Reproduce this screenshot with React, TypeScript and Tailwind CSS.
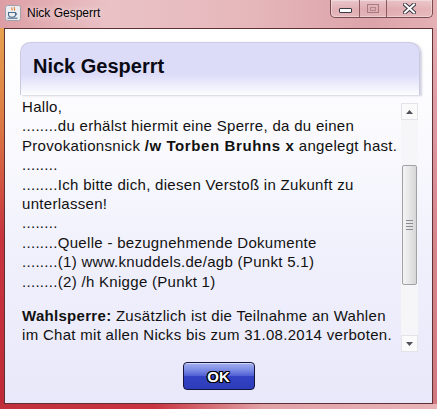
import React from "react";

const FONT = { fontFamily: '"Liberation Sans", Arial, sans-serif' };

function JavaIcon() {
  return (
    <svg width="16" height="16" viewBox="0 0 16 16">
      <rect x="0.5" y="0.5" width="15" height="15" rx="2" fill="#eceef2" stroke="#9ea2ac" />
      <path d="M7 2.5c-1.2 1 1 1.8 0 3 M9.5 2c-1.4 1.3 1.2 2 -0.2 3.5" stroke="#e07a2a" strokeWidth="1.1" fill="none" />
      <path d="M3.5 7.5h7v2.2c0 1.5-1.4 2.5-3.5 2.5s-3.5-1-3.5-2.5z" fill="none" stroke="#4a6a8e" strokeWidth="1.1" />
      <path d="M10.5 8.2c1.6-0.2 1.8 1.8 0 2" fill="none" stroke="#4a6a8e" strokeWidth="1" />
      <path d="M2.5 13.2h10" stroke="#4a6a8e" strokeWidth="1.1" />
    </svg>
  );
}

function TitleBar() {
  return (
    <div className="h-[28px] flex items-start shrink-0">
      <div className="mt-[5px] ml-[5px]">
        <JavaIcon />
      </div>
      <div className="ml-[6px] mt-[6px] text-[12px] leading-[14px] text-black [text-shadow:0_0_6px_rgba(255,255,255,0.9)]" style={FONT}>
        Nick Gesperrt
      </div>
      <div className="ml-auto mr-[4px] flex h-[18px] rounded-b-[5px] border border-t-0 border-[#7a4a4e] overflow-hidden shadow-[inset_0_0_0_1px_rgba(255,255,255,0.35)]">
        <div className="w-[28px] h-full flex items-end justify-center pb-[4px] bg-[linear-gradient(180deg,rgba(255,255,255,0.35),rgba(255,255,255,0.08)_55%,rgba(255,255,255,0.18))]">
          <div className="w-[13px] h-[5px] border border-[#3a3a44] bg-white rounded-[1px]" />
        </div>
        <div className="w-[27px] h-full border-l border-[#8a5a5e] flex items-start justify-center pt-[4px] bg-[linear-gradient(180deg,rgba(255,255,255,0.35),rgba(255,255,255,0.08)_55%,rgba(255,255,255,0.18))]">
          <div className="w-[12px] h-[9px] border border-[rgba(150,110,115,0.8)] flex items-center justify-center">
            <div className="w-[6px] h-[4px] border border-[rgba(150,110,115,0.6)]" />
          </div>
        </div>
        <div className="w-[46px] h-full border-l border-[#8a5a5e] flex items-start justify-center pt-[3px] bg-[linear-gradient(180deg,rgba(255,255,255,0.3),rgba(255,255,255,0.06)_55%,rgba(255,255,255,0.15))]">
          <svg width="13" height="11" viewBox="0 0 13 11">
            <path d="M2 1.5L11 9.5M11 1.5L2 9.5" stroke="#3a3a44" strokeWidth="4" strokeLinecap="square" />
            <path d="M2 1.5L11 9.5M11 1.5L2 9.5" stroke="#ffffff" strokeWidth="2" strokeLinecap="square" />
          </svg>
        </div>
      </div>
    </div>
  );
}

function ScrollBar() {
  return (
    <div className="mt-[6px] w-[17px] h-[249px] flex flex-col bg-[#f6f6f8]">
      <div className="h-[17px] flex items-center justify-center bg-[#fafafa] border border-[#e4e4e8]">
        <svg width="7" height="4" viewBox="0 0 7 4">
          <path d="M0 4L3.5 0L7 4z" fill="#505058" />
        </svg>
      </div>
      <div className="h-[45px]" />
      <div className="h-[120px] mx-[1px] rounded-[2px] border border-[#a0a0a6] bg-[linear-gradient(90deg,#f4f4f4,#e6e6e6_50%,#d6d6d8)] flex flex-col items-center justify-center gap-[2px]">
        <div className="w-[7px] h-[1px] bg-[#8a8a90]" />
        <div className="w-[7px] h-[1px] bg-[#8a8a90]" />
        <div className="w-[7px] h-[1px] bg-[#8a8a90]" />
        <div className="w-[7px] h-[1px] bg-[#8a8a90]" />
      </div>
      <div className="flex-1" />
      <div className="h-[17px] flex items-center justify-center bg-[#fafafa] border border-[#e4e4e8]">
        <svg width="7" height="4" viewBox="0 0 7 4">
          <path d="M0 0L3.5 4L7 0z" fill="#505058" />
        </svg>
      </div>
    </div>
  );
}

function Client() {
  const D = "........";
  return (
    <div className="w-[429px] h-full border border-[#5e2f33] flex flex-col bg-[linear-gradient(180deg,#ffffff_0%,#fbfbfe_25%,#efeffc_65%,#e8e8fa_100%)]" style={FONT}>
      <div className="mt-[13px] ml-[15px] w-[400px] h-[53px] rounded-t-[10px] border-t border-x border-[#c9cadf] shadow-[2px_1px_2px_rgba(160,160,190,0.45)] pt-[11px] pl-[12px] bg-[linear-gradient(180deg,#dcdcf9_0%,#dcdcf9_60%,#eeeefc_82%,#fdfdff_100%)]">
        <div className="text-[20px] leading-[24px] font-bold text-[#0a0a14]">Nick Gesperrt</div>
      </div>
      <div className="flex h-[253px] mt-[2px]">
        <div className="pl-[17px] w-[396px] text-[15px] leading-[19.4px] tracking-[0.3px] text-[#111111] whitespace-nowrap">
          <div>Hallo,</div>
          <div>{D}du erhälst hiermit eine Sperre, da du einen</div>
          <div>
            Provokationsnick <b className="tracking-[0.6px]">/w Torben Bruhns x</b> angelegt hast.
          </div>
          <div>{D}</div>
          <div>{D}Ich bitte dich, diesen Verstoß in Zukunft zu</div>
          <div>unterlassen!</div>
          <div>{D}</div>
          <div>{D}Quelle - bezugnehmende Dokumente</div>
          <div>{D}(1) www.knuddels.de/agb (Punkt 5.1)</div>
          <div>{D}(2) /h Knigge (Punkt 1)</div>
          <div className="mt-[15px]">
            <b>Wahlsperre:</b> Zusätzlich ist die Teilnahme an Wahlen
          </div>
          <div>im Chat mit allen Nicks bis zum 31.08.2014 verboten.</div>
        </div>
        <ScrollBar />
      </div>
      <div className="mt-[12px] self-center w-[72px] h-[28px] rounded-[4px] border border-[#14143c] bg-[linear-gradient(180deg,#a4b0f0_0%,#7686e2_30%,#4e5ed4_50%,#3242c4_52%,#2c3cb8_100%)] shadow-[inset_0_1px_0_rgba(255,255,255,0.5)] flex items-center justify-center">
        <span className="text-[15px] font-bold text-white leading-none [text-shadow:-1px_-1px_0_#000,1px_-1px_0_#000,-1px_1px_0_#000,1px_1px_0_#000,0_1px_0_#000,0_-1px_0_#000,1px_0_0_#000,-1px_0_0_#000]">
          OK
        </span>
      </div>
    </div>
  );
}

export default function App() {
  return (
    <div className="w-[437px] h-[409px] flex flex-col overflow-hidden bg-[linear-gradient(90deg,#dc9ea4,#eac2c6_25%,#e6b8bc_55%,#dca4aa_85%,#e4b0b4)]">
      <TitleBar />
      <div className="flex h-[376px]">
        <div className="w-[4px] h-full bg-[linear-gradient(180deg,#e6a24e,#dc7a44_25%,#c8343e_55%,#c02a38)]" />
        <Client />
        <div className="w-[4px] h-full bg-[linear-gradient(180deg,#e2aab0,#d88890_50%,#d07880)]" />
      </div>
      <div className="h-[5px] bg-[linear-gradient(90deg,#c0303a,#c83440_35%,#e0a0a6_60%,#e8b4b8_100%)]" />
    </div>
  );
}
